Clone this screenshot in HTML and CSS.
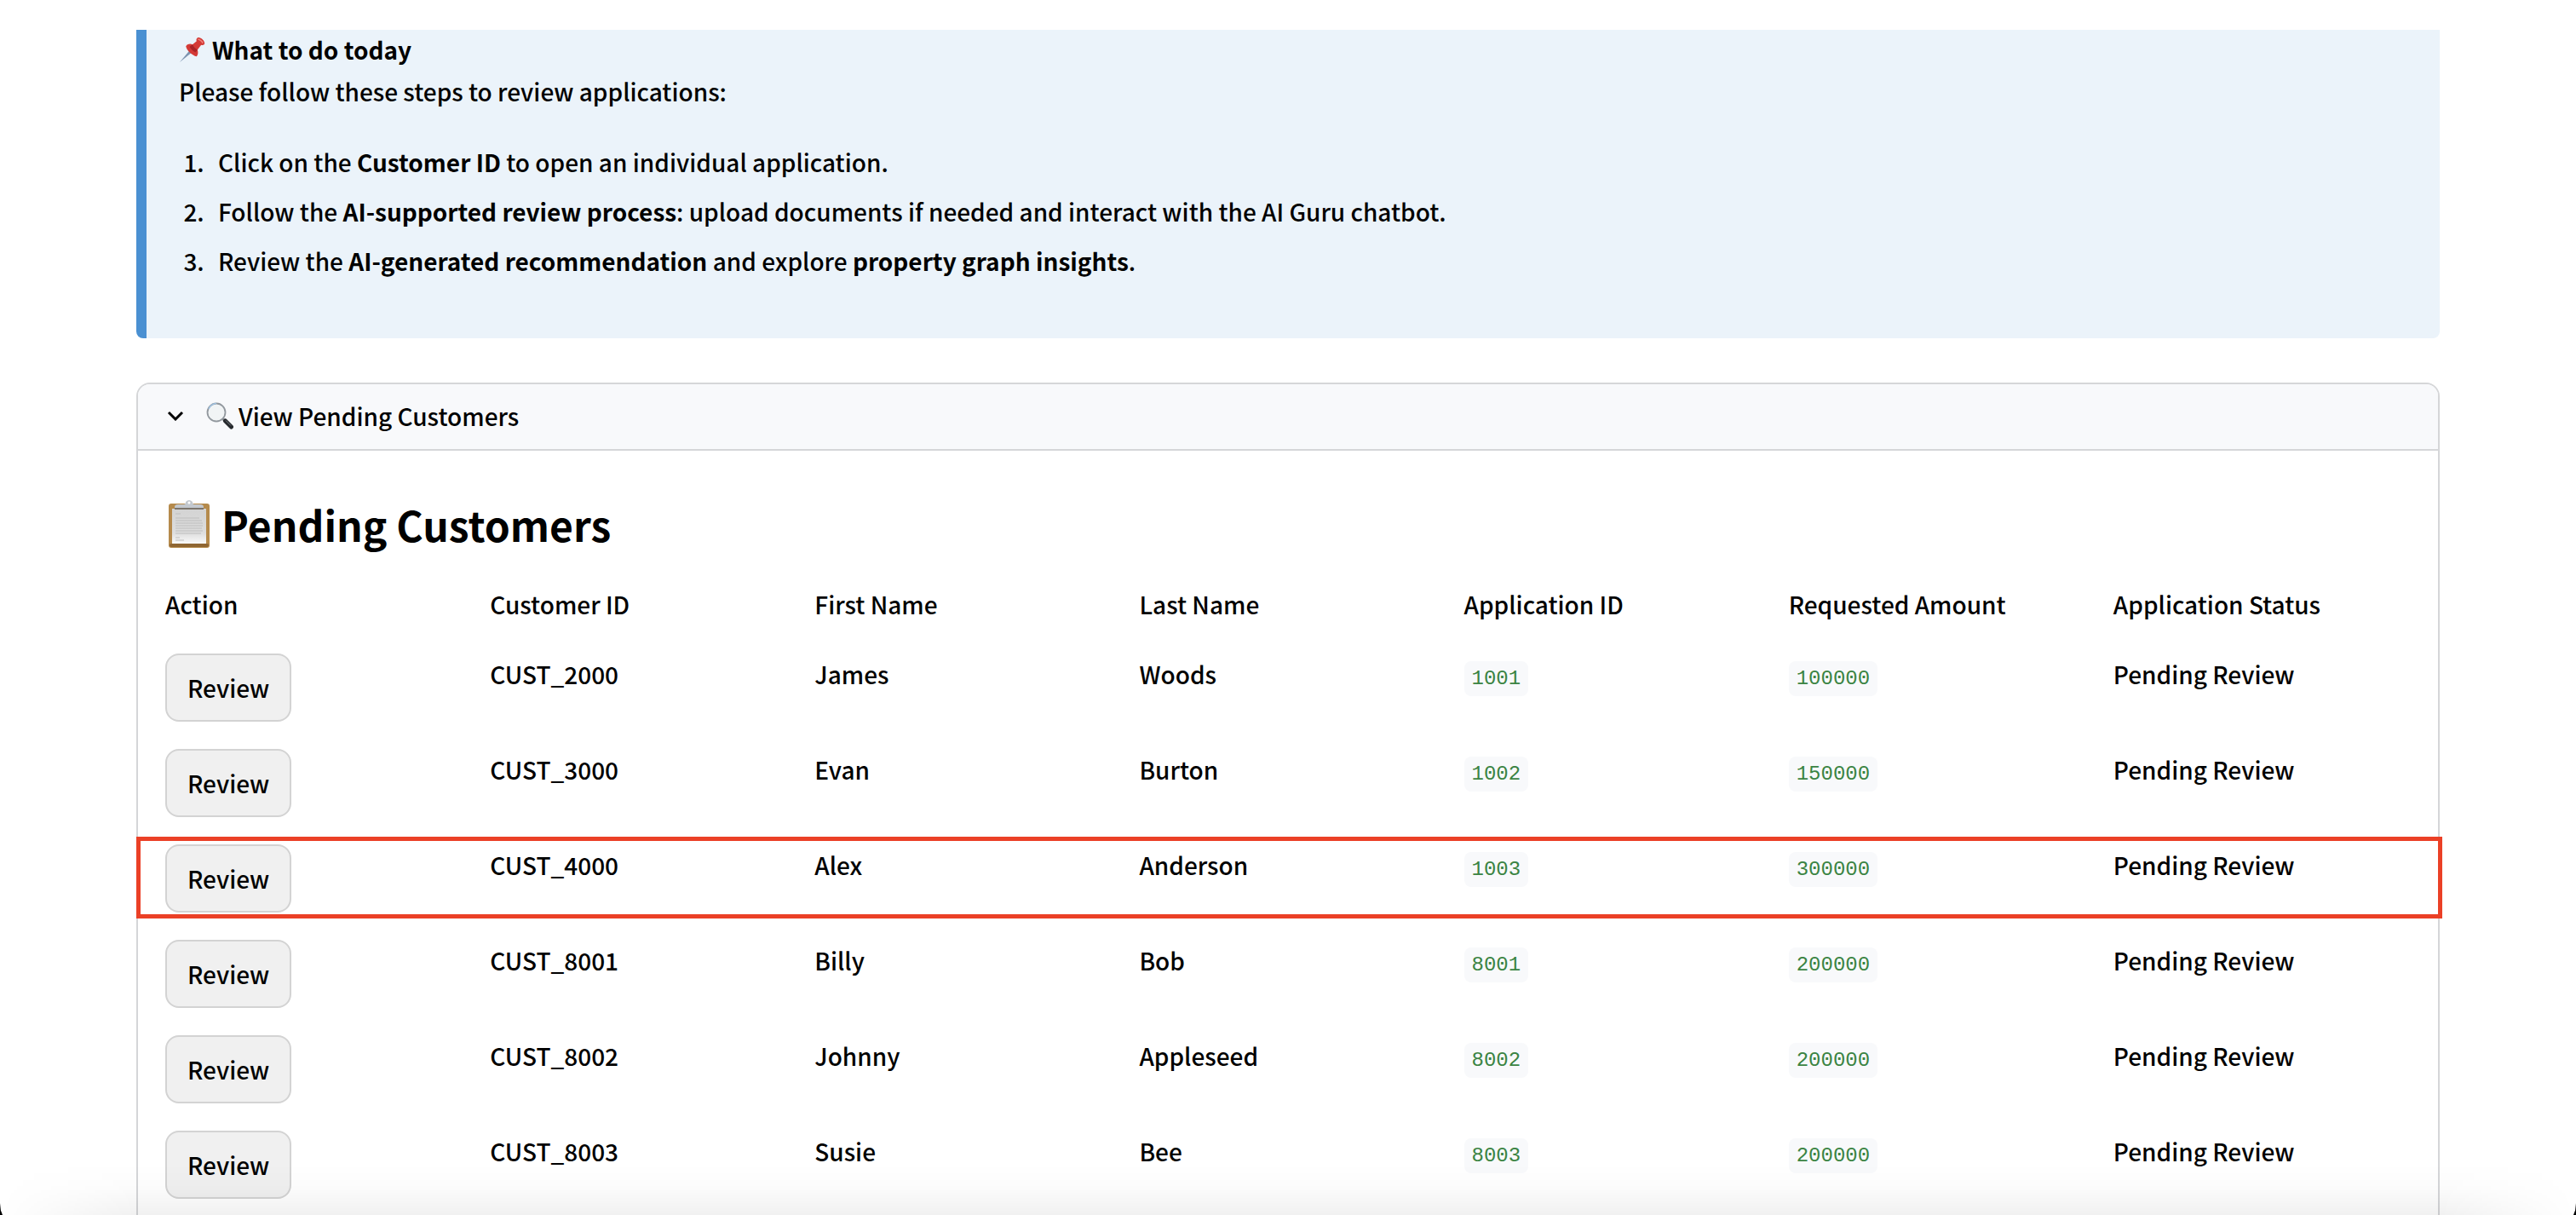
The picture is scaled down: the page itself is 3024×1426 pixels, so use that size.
FILE: index.html
```html
<!DOCTYPE html>
<html lang="en">
<head>
<meta charset="utf-8">
<meta name="viewport" content="width=device-width, initial-scale=1">
<title>Pending Customers</title>
<link rel="stylesheet" href="styles.css">
</head>
<body>
<div class="app">
  <main class="content">
    <section class="note">
      <p class="note-title">
        <svg class="pin" viewBox="0 0 32 32" aria-hidden="true">
          <path d="M1 31 L14 15.500 L17 18 Z" fill="#7d94b0"/>
          <path d="M8.500 11.500 C11 8.500 14 8.500 16.500 9.500 L21.500 5.500 C20.500 3 22 .5 24.500 1 C28 2 31 5 31.200 8 C31 10.500 28.500 10.500 27 10 L22.500 16 C23.500 19 23.500 21.500 21.500 24 C16 22.500 9.500 17 8.500 11.500Z" fill="#d43a36"/>
          <path d="M16.500 9.500 C18 12.500 20 14.500 22.500 16 L20 19 C16.500 17 14 14.500 13 12Z" fill="#a92326"/>
          <path d="M23 3 C25 3 28.500 6 29 8" fill="none" stroke="#f0807a" stroke-width="1.500"/>
        </svg>
        <strong>What to do today</strong>
      </p>
      <p class="note-lead">Please follow these steps to review applications:</p>
      <ol class="steps">
        <li>Click on the <strong>Customer ID</strong> to open an individual application.</li>
        <li>Follow the <strong>AI-supported review process</strong>: upload documents if needed and interact with the AI Guru chatbot.</li>
        <li>Review the <strong>AI-generated recommendation</strong> and explore <strong>property graph insights</strong>.</li>
      </ol>
    </section>

    <details class="expander" open>
      <summary class="expander-header">
        <svg class="chevron" viewBox="0 0 20 12" aria-hidden="true"><path d="M2 2 L10 10 L18 2" fill="none" stroke="#000" stroke-width="3"/></svg>
        <svg class="lens" viewBox="0 0 32 32" aria-hidden="true">
          <path d="M19 19 L23 23" stroke="#8b8f94" stroke-width="3"/>
          <path d="M22.500 22 L29.500 29" stroke="#26292d" stroke-width="5" stroke-linecap="round"/>
          <path d="M23 21.500 L29 27.500" stroke="#777c82" stroke-width="1"/>
          <circle cx="12" cy="12" r="10.500" fill="#f1f4f5" stroke="#92989e" stroke-width="1.800"/>
          <path d="M3 8 A10.500 10.500 0 0 1 12 1.500" fill="none" stroke="#9fc0df" stroke-width="1.500"/>
        </svg>
        <span>View Pending Customers</span>
      </summary>
      <div class="expander-body">
        <h2 class="heading">
          <svg class="clipboard" viewBox="0 0 48 56" aria-hidden="true">
            <defs><linearGradient id="paper" x1="0" y1="0" x2="0" y2="1"><stop offset="0" stop-color="#d3d3d3"/><stop offset=".7" stop-color="#dedede"/><stop offset="1" stop-color="#fafafa"/></linearGradient></defs>
            <rect x="0" y="4" width="48" height="52" rx="3" fill="#b58a4c"/>
            <rect x="1" y="51" width="46" height="4" rx="2" fill="#8f6632"/>
            <rect x="4" y="10" width="40" height="41" fill="url(#paper)"/>
            <path d="M8 16h6 M8 21h28 M8 24h31 M8 27h32 M8 30h32 M8 33h31 M8 36h32 M8 39h30 M8 44h5 M8 47h10" stroke="#bdbdbd" stroke-width="1.200"/>
            <path d="M7 10 V8 Q7 5 11 5 H18 Q20 5 20 2 Q22 0 24 0 Q26 0 28 2 Q28 5 30 5 H37 Q41 5 41 8 V10Z" fill="#c3c8ce"/>
            <rect x="7" y="9" width="34" height="2" fill="#7c756c"/>
            <circle cx="24" cy="3" r="1.500" fill="#fff"/>
          </svg>
          <span>Pending Customers</span>
        </h2>
        <table class="customers">
          <thead>
            <tr><th scope="col">Action</th><th scope="col">Customer ID</th><th scope="col">First Name</th><th scope="col">Last Name</th><th scope="col">Application ID</th><th scope="col">Requested Amount</th><th scope="col">Application Status</th></tr>
          </thead>
          <tbody>
            <tr><td><button type="button" class="review">Review</button></td><td>CUST_2000</td><td>James</td><td>Woods</td><td><code>1001</code></td><td><code>100000</code></td><td>Pending Review</td></tr>
            <tr><td><button type="button" class="review">Review</button></td><td>CUST_3000</td><td>Evan</td><td>Burton</td><td><code>1002</code></td><td><code>150000</code></td><td>Pending Review</td></tr>
            <tr class="marked"><td><button type="button" class="review">Review</button></td><td>CUST_4000</td><td>Alex</td><td>Anderson</td><td><code>1003</code></td><td><code>300000</code></td><td>Pending Review</td></tr>
            <tr><td><button type="button" class="review">Review</button></td><td>CUST_8001</td><td>Billy</td><td>Bob</td><td><code>8001</code></td><td><code>200000</code></td><td>Pending Review</td></tr>
            <tr><td><button type="button" class="review">Review</button></td><td>CUST_8002</td><td>Johnny</td><td>Appleseed</td><td><code>8002</code></td><td><code>200000</code></td><td>Pending Review</td></tr>
            <tr><td><button type="button" class="review">Review</button></td><td>CUST_8003</td><td>Susie</td><td>Bee</td><td><code>8003</code></td><td><code>200000</code></td><td>Pending Review</td></tr>
          </tbody>
        </table>
      </div>
    </details>
  </main>
  <div class="window-edge" aria-hidden="true"></div>
</div>
</body>
</html>
```
FILE: styles.css
```css
*,
*::before,
*::after {
  box-sizing: border-box;
}

body {
  margin: 0;
  background: #fff;
  color: #000;
  font-family: "Noto Sans CJK SC", "Noto Sans", sans-serif;
  font-size: 28px;
  font-weight: 500;
  line-height: 52px;
}

strong {
  font-weight: 700;
}

.app {
  position: relative;
  display: flex;
  flex-direction: column;
  height: 100vh;
  padding-top: 35px;
}

.content {
  flex: 1;
  min-height: 0;
  padding: 0 160px;
  overflow-y: auto;
  scrollbar-width: none;
}

/* Instructions */
.note {
  padding: 0 38px 62px;
  border-left: 12px solid #4a90d2;
  border-radius: 0 0 8px 8px;
  background: #ebf3fa;
}

.note-title {
  display: flex;
  align-items: center;
  gap: 8px;
  margin: 0;
  line-height: 46px;
}

.pin {
  width: 31px;
  height: 31px;
}

.note-lead {
  margin: 0;
}

.steps {
  margin: 28px 0 0;
  padding-left: 36px;
  line-height: 58px;
}

.steps li {
  padding-left: 10px;
}

/* Expander */
.expander {
  margin-top: 52px;
  border: 2px solid #d5d6d8;
  border-radius: 16px;
}

.expander-header {
  display: flex;
  align-items: center;
  height: 78px;
  padding: 0 34px 3px;
  border-bottom: 2px solid #d5d6d8;
  border-radius: 14px 14px 0 0;
  background: #f8f9fb;
  list-style: none;
  cursor: pointer;
}

.chevron {
  width: 20px;
  height: 12px;
}

.lens {
  width: 32px;
  height: 32px;
  margin: 0 6px 0 26px;
}

.expander-body {
  padding: 46px 0 0 32px;
}

.heading {
  display: flex;
  align-items: center;
  gap: 14px;
  margin: 0;
  padding-left: 4px;
  font-size: 48px;
  font-weight: 700;
  line-height: 80px;
}

.clipboard {
  width: 48px;
  height: 56px;
}

/* Customer table */
.customers {
  width: 100%;
  margin-top: 28px;
  border-collapse: collapse;
  table-layout: fixed;
}

.customers th,
.customers td {
  padding: 0;
  font-weight: 500;
  text-align: left;
  vertical-align: top;
}

.customers th {
  padding-bottom: 32px;
}

.customers td {
  height: 112px;
  line-height: 48px;
}

.customers code {
  display: inline-block;
  padding: 0 9px;
  border-radius: 8px;
  background: #f8f9fb;
  color: #3b8443;
  font-family: "Liberation Mono", monospace;
  font-size: 24px;
  font-weight: 400;
  line-height: 41px;
}

.review {
  display: block;
  height: 80px;
  padding: 0 24px;
  border: 2px solid #d3d3d3;
  border-radius: 16px;
  background: #f0f0f0;
  color: inherit;
  font: inherit;
  cursor: pointer;
}

.marked {
  position: relative;
}

/* Outline drawn across the whole card, over its side borders */
.marked td:first-child::after {
  content: "";
  position: absolute;
  top: -9px;
  right: -5px;
  left: -34px;
  height: 96px;
  border: 5px solid #eb4026;
  pointer-events: none;
}

/* Soft shade and rounded corners along the bottom of the window */
.window-edge {
  position: absolute;
  right: 0;
  bottom: 0;
  left: 0;
  height: 60px;
  background: linear-gradient(to bottom, rgba(0, 0, 0, 0), rgba(0, 0, 0, 0.015) 50%, rgba(0, 0, 0, 0.055));
  mask-image: linear-gradient(to right, transparent, #000 160px, #000 calc(100% - 160px), transparent);
  pointer-events: none;
}

.app::before,
.app::after {
  content: "";
  position: absolute;
  bottom: 0;
  width: 3px;
  height: 14px;
  background: #000;
}

.app::before {
  left: 0;
  clip-path: polygon(0 0, 30% 60%, 100% 100%, 0 100%);
}

.app::after {
  right: 0;
  clip-path: polygon(100% 0, 70% 60%, 0 100%, 100% 100%);
}
```
